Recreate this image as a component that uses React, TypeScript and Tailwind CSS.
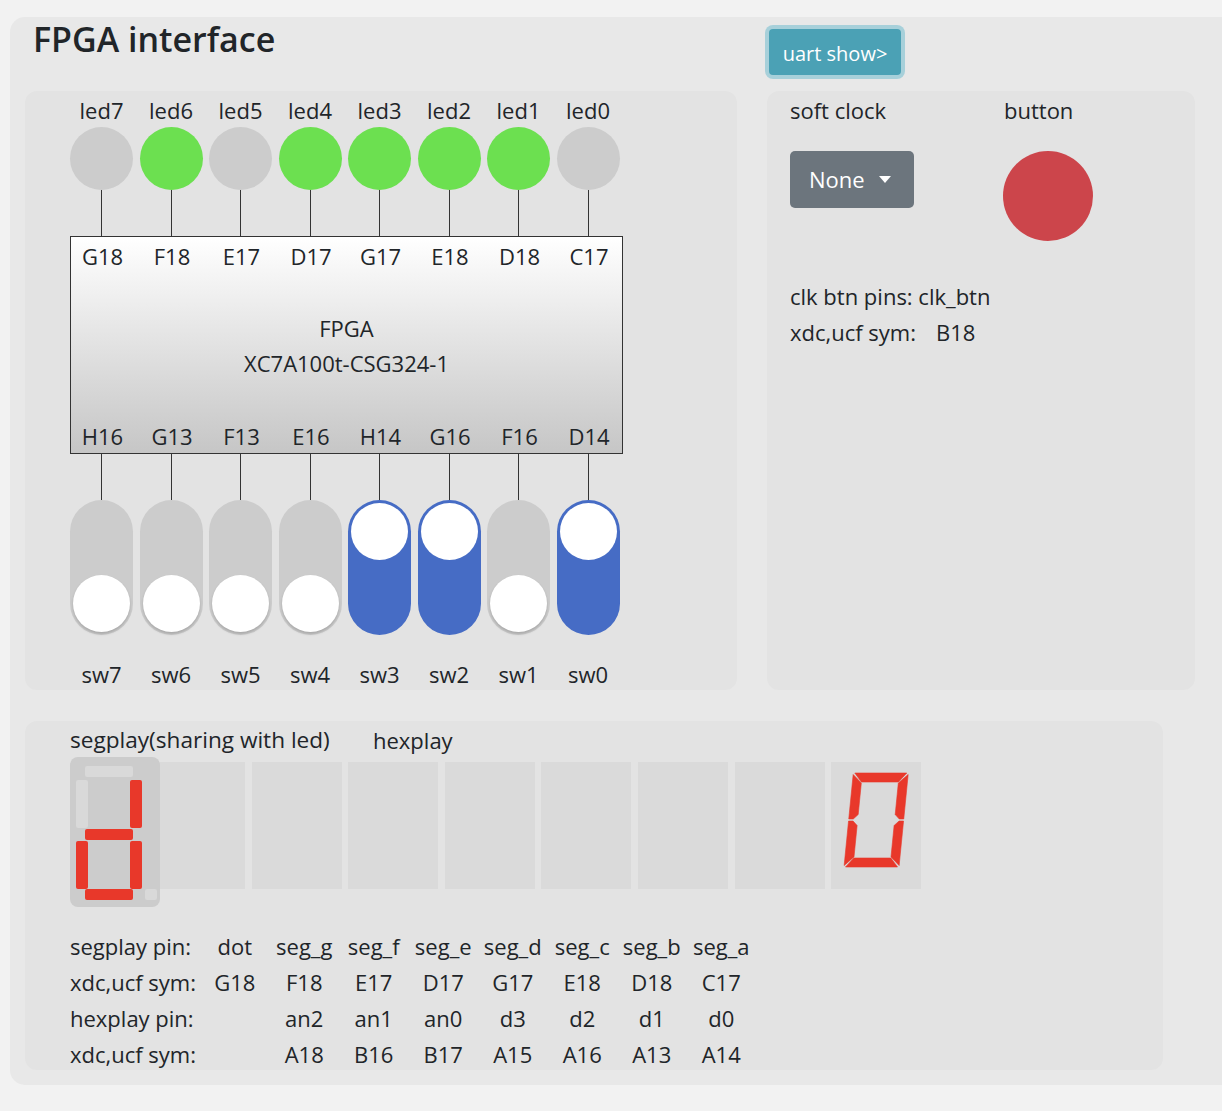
const leds = [
  { name: "led7", pin: "G18", on: false },
  { name: "led6", pin: "F18", on: true },
  { name: "led5", pin: "E17", on: false },
  { name: "led4", pin: "D17", on: true },
  { name: "led3", pin: "G17", on: true },
  { name: "led2", pin: "E18", on: true },
  { name: "led1", pin: "D18", on: true },
  { name: "led0", pin: "C17", on: false },
];

const switches = [
  { name: "sw7", pin: "H16", on: false },
  { name: "sw6", pin: "G13", on: false },
  { name: "sw5", pin: "F13", on: false },
  { name: "sw4", pin: "E16", on: false },
  { name: "sw3", pin: "H14", on: true },
  { name: "sw2", pin: "G16", on: true },
  { name: "sw1", pin: "F16", on: false },
  { name: "sw0", pin: "D14", on: true },
];

const pinTable = [
  ["segplay pin:", "dot", "seg_g", "seg_f", "seg_e", "seg_d", "seg_c", "seg_b", "seg_a"],
  ["xdc,ucf sym:", "G18", "F18", "E17", "D17", "G17", "E18", "D18", "C17"],
  ["hexplay pin:", "", "an2", "an1", "an0", "d3", "d2", "d1", "d0"],
  ["xdc,ucf sym:", "", "A18", "B16", "B17", "A15", "A16", "A13", "A14"],
];

// segplay: a..g + dot, in box coordinates (90x150)
const segRects = [
  { k: "a", x: 15, y: 9, w: 48, h: 11, on: false },
  { k: "f", x: 6, y: 23, w: 12, h: 48, on: false },
  { k: "b", x: 60, y: 23, w: 12, h: 48, on: true },
  { k: "g", x: 15, y: 72, w: 48, h: 11, on: true },
  { k: "e", x: 6, y: 84, w: 12, h: 48, on: true },
  { k: "c", x: 60, y: 84, w: 12, h: 48, on: true },
  { k: "d", x: 15, y: 132, w: 48, h: 11, on: true },
  { k: "dot", x: 75, y: 132, w: 12, h: 11, on: false },
];

const L = 13, R = 68, T = 11, B = 105, M = 58, t = 9;
const hexSegs: number[][][] = [
  [[L + 1.5, T], [R - 1.5, T], [R - t, T + t], [L + t, T + t]],
  [[R, T + 1.5], [R, M - 1], [R - t / 2, M - 1], [R - t, M - t / 2 - 1], [R - t, T + t + 1]],
  [[R, M + 1], [R, B - 1.5], [R - t, B - t - 1], [R - t, M + t / 2 + 1], [R - t / 2, M + 1]],
  [[L + 1.5, B], [R - 1.5, B], [R - t, B - t], [L + t, B - t]],
  [[L, M + 1], [L + t / 2, M + 1], [L + t, M + t / 2 + 1], [L + t, B - t - 1], [L, B - 1.5]],
  [[L, T + 1.5], [L + t, T + t + 1], [L + t, M - t / 2 - 1], [L + t / 2, M - 1], [L, M - 1]],
];

const skew = (pts: number[][]) =>
  pts.map(([x, y]) => `${(x + (B - y) * 0.099).toFixed(2)},${y}`).join(" ");

const SegPlay = () => (
  <div className="relative z-10 h-[150px] w-[90px] shrink-0 rounded-[8px] bg-[#cccccc]">
    <svg width="90" height="150" viewBox="0 0 90 150">
      {segRects.map((s) => (
        <rect key={s.k} x={s.x} y={s.y} width={s.w} height={s.h} rx="2" fill={s.on ? "#e8382a" : "#d9d9d9"} />
      ))}
    </svg>
  </div>
);

const HexBox = ({ digit }: { digit: boolean }) => (
  <div className="h-[127px] w-[90px] bg-[#dadada]">
    {digit && (
      <svg width="90" height="127" viewBox="0 0 90 127">
        {hexSegs.map((p, i) => (
          <polygon key={i} points={skew(p)} fill="#e8382a" stroke="#e8382a" strokeWidth="0.6" strokeLinejoin="round" />
        ))}
      </svg>
    )}
  </div>
);

const App = () => {
  return (
    <div className="min-h-screen overflow-hidden bg-[#f2f2f2] pl-[10px] pt-[17px] font-['Open_Sans',sans-serif] text-[22px] text-[#212529]">
      <div className="h-[1068px] w-[1240px] rounded-[15px] bg-[#e8e8e8] px-[15px]">
        {/* header */}
        <div className="grid h-[74px] grid-cols-[712px_428px] gap-x-[30px]">
          <h1 className="ml-[8px] mt-[2px] text-[34px] font-semibold leading-[1.2]">FPGA interface</h1>
          <div className="ml-[2px] mt-[12px]">
            <button className="h-[46px] w-[132px] rounded-[4px] bg-[#4ba1b5] pt-[3px] text-[20px] text-white ring-4 ring-[#a7d0da]">
              uart show&gt;
            </button>
          </div>
        </div>

        <div className="grid grid-cols-[712px_428px] gap-x-[30px]">
          {/* board */}
          <div className="h-[599px] rounded-[12px] bg-[#e3e3e3] pl-[45px] pt-[4px]">
            <div className="flex gap-[6.5px]">
              {leds.map((l) => (
                <div key={l.name} className="flex w-[63px] flex-col items-center">
                  <span className="h-[30px] leading-[30px]">{l.name}</span>
                  <div className={`mt-[2px] h-[63px] w-[63px] rounded-full ${l.on ? "bg-[#6ce050]" : "bg-[#cccccc]"}`} />
                  <div className="h-[46px] w-px bg-[#333]" />
                </div>
              ))}
            </div>

            <div className="h-[218px] w-[553px] border border-[#333] bg-linear-to-b from-white to-[#c6c6c6] pb-[2px]">
              <div className="mt-[4px] flex gap-[6.5px]">
                {leds.map((l) => (
                  <span key={l.pin} className="w-[63px] text-center leading-[30px]">{l.pin}</span>
                ))}
              </div>
              <div className="mt-[40px] text-center leading-[35px]">
                <div>FPGA</div>
                <div>XC7A100t-CSG324-1</div>
              </div>
              <div className="mt-[40px] flex gap-[6.5px]">
                {switches.map((s) => (
                  <span key={s.pin} className="w-[63px] text-center leading-[30px]">{s.pin}</span>
                ))}
              </div>
            </div>

            <div className="flex gap-[6.5px]">
              {switches.map((s) => (
                <div key={s.name} className="flex w-[63px] flex-col items-center">
                  <div className="h-[46px] w-px bg-[#333]" />
                  <div
                    className={`flex h-[135px] w-[63px] flex-col rounded-full p-[3px] ${
                      s.on ? "justify-start bg-[#466cc5]" : "justify-end bg-[#cccccc]"
                    }`}
                  >
                    <div
                      className={`h-[57px] w-[57px] rounded-full bg-white ${
                        s.on ? "" : "shadow-[0_2px_3px_rgba(0,0,0,0.18)]"
                      }`}
                    />
                  </div>
                  <span className="mt-[24px] h-[30px] leading-[30px]">{s.name}</span>
                </div>
              ))}
            </div>
          </div>

          {/* clock & button */}
          <div className="h-[599px] rounded-[12px] bg-[#e3e3e3] pl-[23px] pt-[4px]">
            <div className="flex leading-[30px]">
              <span className="w-[214px]">soft clock</span>
              <span>button</span>
            </div>
            <div className="mt-[26px] flex">
              <div className="w-[213px]">
                <button className="flex h-[57px] w-[124px] items-center rounded-[5px] bg-[#6c757d] pl-[19px] text-white">
                  None
                  <span className="ml-[14px] inline-block border-x-[6px] border-t-[7px] border-x-transparent border-t-white" />
                </button>
              </div>
              <div className="h-[90px] w-[90px] rounded-full bg-[#cc454b]" />
            </div>
            <div className="mt-[37px] leading-[36px]">
              <div>clk btn pins: clk_btn</div>
              <div>
                <span className="inline-block w-[146px]">xdc,ucf sym:</span>B18
              </div>
            </div>
          </div>
        </div>

        {/* seg displays */}
        <div className="mt-[31px] h-[349px] w-[1138px] rounded-[12px] bg-[#e3e3e3] pl-[45px] pt-[4px]">
          <div className="flex h-[30px] leading-[30px]">
            <span className="w-[303px] text-[22.6px]">segplay(sharing with led)</span>
            <span>hexplay</span>
          </div>
          <div className="mt-[2px] flex items-start">
            <SegPlay />
            <div className="-ml-[5px] mt-[5px] flex gap-[6.6px]">
              {[0, 1, 2, 3, 4, 5, 6, 7].map((i) => (
                <HexBox key={i} digit={i === 7} />
              ))}
            </div>
          </div>
          <div className="mt-[24px] grid grid-cols-[130px_repeat(8,69.5px)] gap-y-[6px] leading-[30px]">
            {pinTable.map((row, r) =>
              row.map((cell, c) => (
                <span key={`${r}-${c}`} className={c === 0 ? "whitespace-nowrap" : "text-center"}>
                  {cell}
                </span>
              ))
            )}
          </div>
        </div>
      </div>
    </div>
  );
};

export default App;
